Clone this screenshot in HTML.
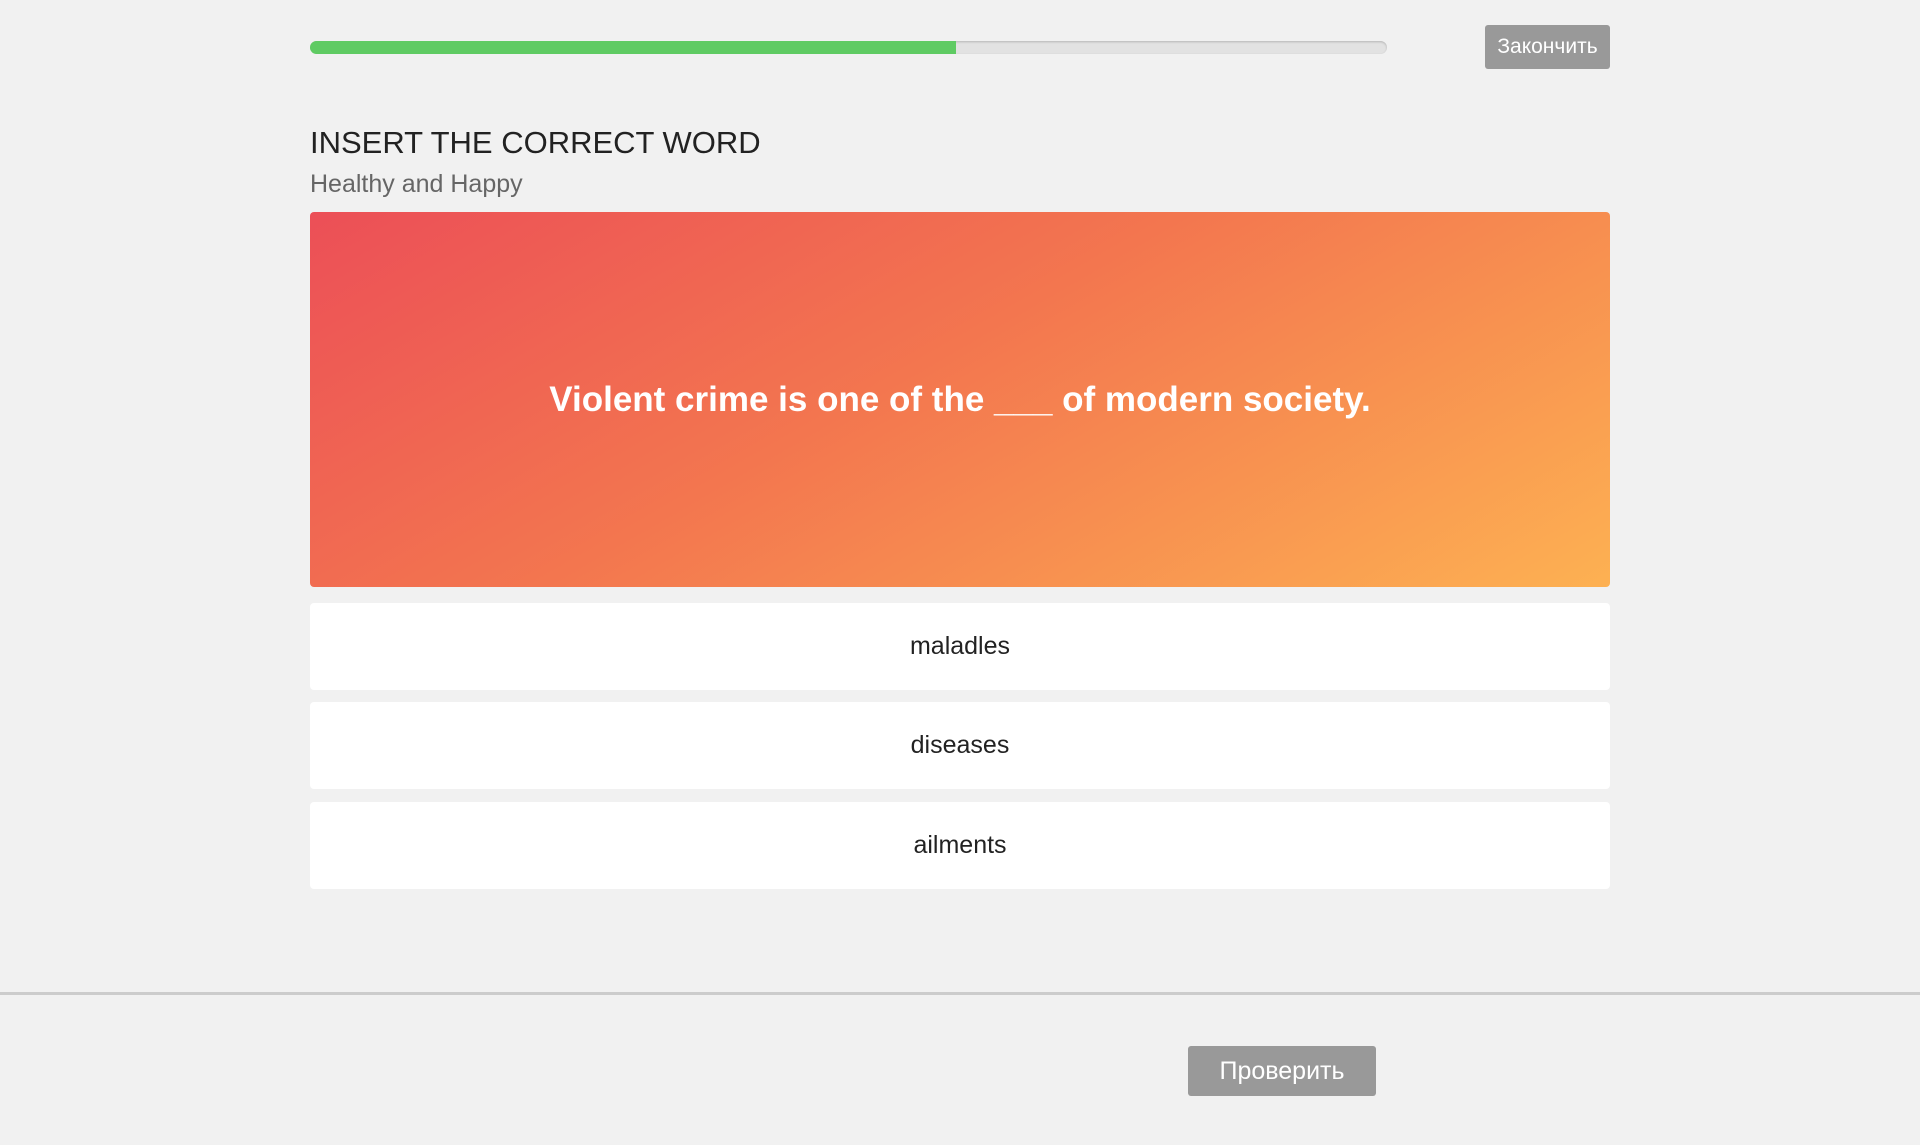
<!DOCTYPE html>
<html><head><meta charset="utf-8"><style>
body{margin:0;background:#f1f1f1;font-family:"Liberation Sans",sans-serif;width:1920px;height:1145px;position:relative;overflow:hidden}
.prog{position:absolute;left:310px;top:41px;width:1077px;height:13px;background:#e2e2e2;border-radius:7px;box-shadow:inset 0 1px 2px rgba(0,0,0,.2)}
.prog div{width:646px;height:13px;background:#5fcb63;border-radius:7px 0 0 7px}
.fin{position:absolute;left:1485px;top:25px;width:125px;height:44px;background:#999;color:#fff;border-radius:3px;font-size:21px;line-height:44px;text-align:center}
h1{position:absolute;left:310px;top:125px;margin:0;font-weight:normal;font-size:31px;color:#222}
.sub{position:absolute;left:310px;top:170px;font-size:25px;color:#666}
.card{position:absolute;left:310px;top:212px;width:1300px;height:375px;border-radius:4px;background:linear-gradient(150deg,#ec4f57 0%,#f3764f 45%,#fdb152 100%);color:#fff;font-weight:bold;font-size:35px;display:flex;align-items:center;justify-content:center}
.opt{position:absolute;left:310px;width:1300px;height:87px;background:#fff;border-radius:4px;font-size:25px;color:#222;display:flex;align-items:center;justify-content:center}
.line{position:absolute;left:0;top:992px;width:1920px;height:3px;background:#ccc}
.chk{position:absolute;left:1188px;top:1046px;width:188px;height:50px;background:#999;color:#fff;border-radius:3px;font-size:25px;line-height:50px;text-align:center}
</style></head><body>
<div class="prog"><div></div></div>
<div class="fin">Закончить</div>
<h1>INSERT THE CORRECT WORD</h1>
<div class="sub">Healthy and Happy</div>
<div class="card">Violent crime is one of the ___ of modern society.</div>
<div class="opt" style="top:603px">maladles</div>
<div class="opt" style="top:702px">diseases</div>
<div class="opt" style="top:802px">ailments</div>
<div class="line"></div>
<div class="chk">Проверить</div>
</body></html>
